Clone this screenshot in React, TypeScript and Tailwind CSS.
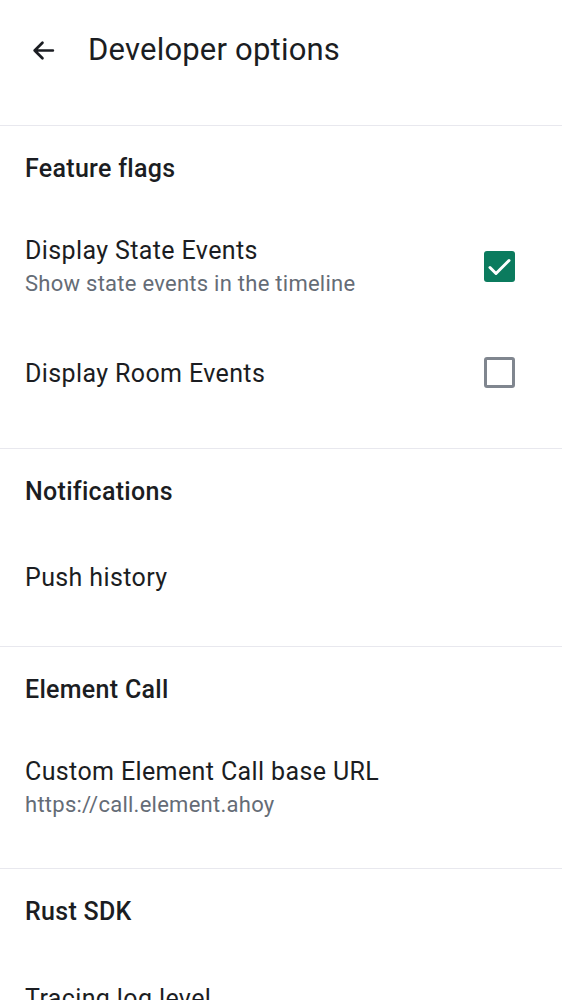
import React from "react";

function Divider() {
  return <div className="h-px bg-[#e8e8ee]" />;
}

function SectionHeader({ title }: { title: string }) {
  return (
    <div className="h-[84px] flex items-center px-[25px] pt-[2px]">
      <span className="text-[25px] font-medium text-[#1b1d22] leading-[36px] tracking-[0.3px]">{title}</span>
    </div>
  );
}

function Checkbox({ checked }: { checked: boolean }) {
  if (checked) {
    return (
      <div className="w-[31px] h-[31px] rounded-[3px] bg-[#0b7b5e]">
        <svg width="31" height="31" viewBox="0 0 31 31" fill="none">
          <path d="M6 16.5l6 6L25 9.5" stroke="white" strokeWidth="3" strokeLinecap="round" strokeLinejoin="round" />
        </svg>
      </div>
    );
  }
  return <div className="w-[31px] h-[31px] rounded-[3px] border-[3px] border-[#80868f] bg-white" />;
}

function Item({
  title,
  subtitle,
  checkbox,
  height,
}: {
  title: string;
  subtitle?: string;
  checkbox?: boolean;
  height: string;
}) {
  return (
    <div className={`${height} flex items-center px-[25px]`}>
      <div className={`flex-1 flex flex-col ${subtitle ? "" : "pt-[3px]"}`}>
        <span className="text-[25px] text-[#1b1d22] leading-[36px] tracking-[0.38px]">{title}</span>
        {subtitle && (
          <span className="text-[22px] text-[#656c76] leading-[30px] tracking-[0.26px]">{subtitle}</span>
        )}
      </div>
      {checkbox !== undefined && (
        <div className="pr-[22px]">
          <Checkbox checked={checkbox} />
        </div>
      )}
    </div>
  );
}

export default function App() {
  return (
    <div className="w-[562px] h-[1000px] overflow-hidden bg-white" style={{ fontFamily: "Roboto, 'Noto Sans', sans-serif" }}>
      <div className="h-[125px] flex items-start pt-[26px]">
        <div className="flex items-center h-[48px]">
          <div className="w-[88px] flex items-center pl-[31px]">
            <svg width="25" height="25" viewBox="0 0 24 24" fill="none">
              <path d="M21 12H3.5M11 4.5L3.5 12l7.5 7.5" stroke="#1b1d22" strokeWidth="2.6" strokeLinecap="round" strokeLinejoin="round" />
            </svg>
          </div>
          <span className="text-[31px] text-[#1b1d22] leading-[40px] tracking-[0.2px]">Developer options</span>
        </div>
      </div>
      <Divider />
      <SectionHeader title="Feature flags" />
      <Item title="Display State Events" subtitle="Show state events in the timeline" checkbox={true} height="h-[112px]" />
      <Item title="Display Room Events" checkbox={false} height="h-[100px]" />
      <div className="h-[26px]" />
      <Divider />
      <SectionHeader title="Notifications" />
      <Item title="Push history" height="h-[86px]" />
      <div className="h-[27px]" />
      <Divider />
      <SectionHeader title="Element Call" />
      <Item title="Custom Element Call base URL" subtitle="https://call.element.ahoy" height="h-[112px]" />
      <div className="h-[25px]" />
      <Divider />
      <SectionHeader title="Rust SDK" />
      <Item title="Tracing log level" height="h-[88px]" />
    </div>
  );
}
